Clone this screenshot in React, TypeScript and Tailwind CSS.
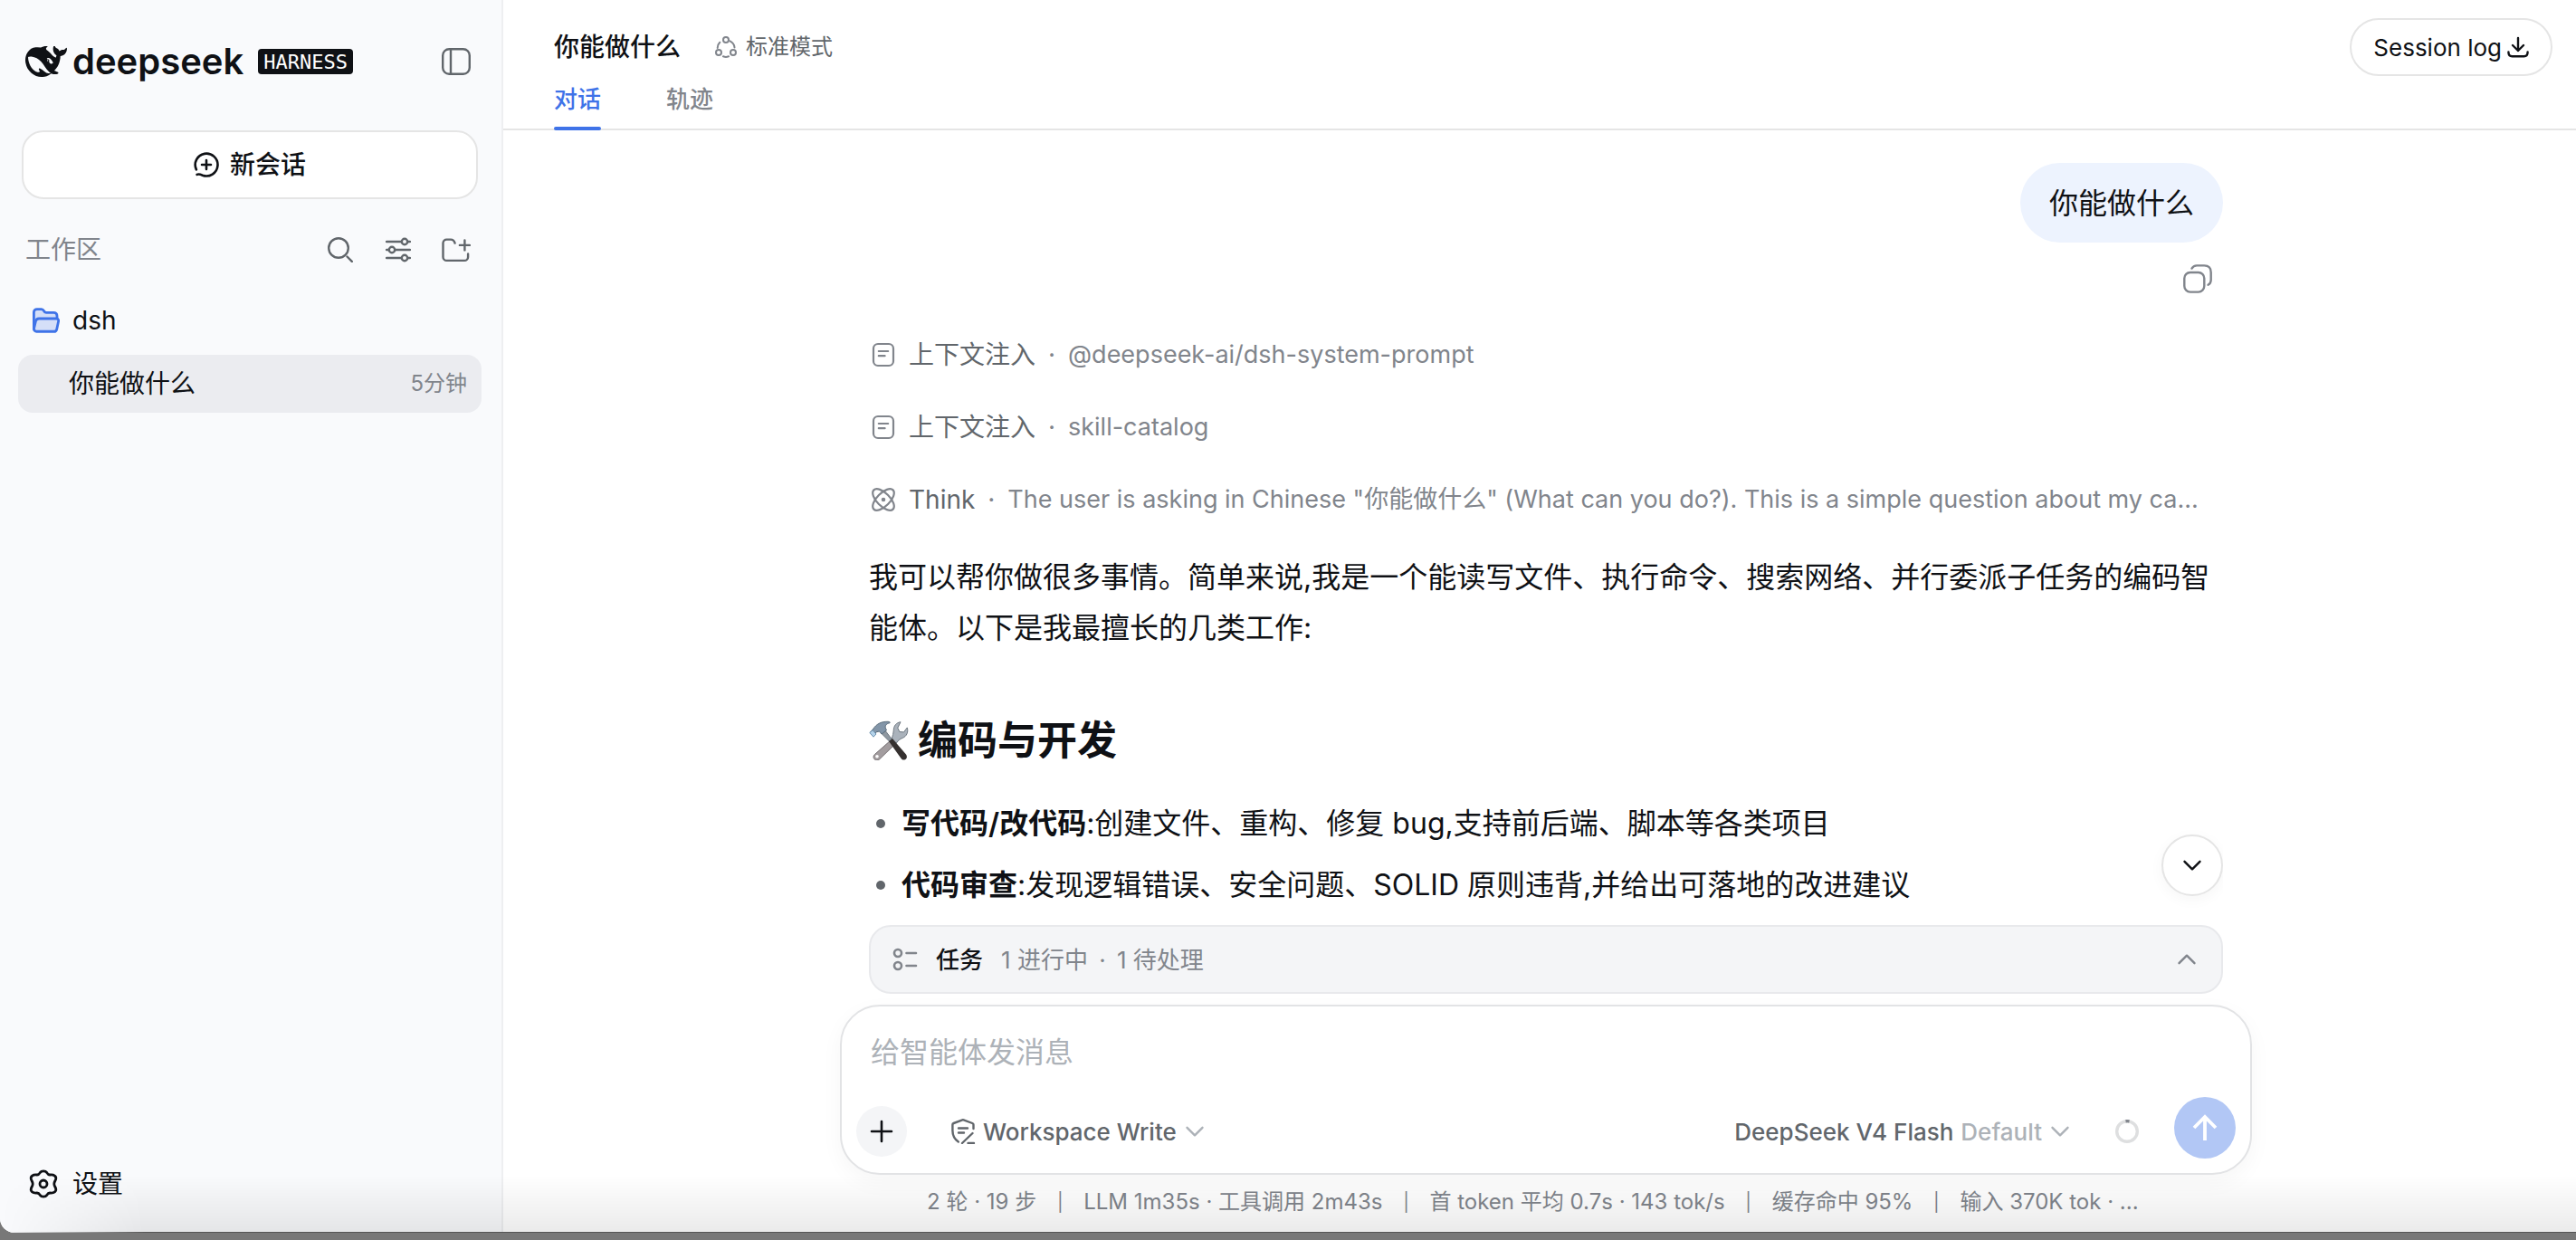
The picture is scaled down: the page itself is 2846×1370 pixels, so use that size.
import type { ReactNode } from "react";

const line = {
  fill: "none",
  stroke: "currentColor",
  strokeWidth: 2.4,
  strokeLinecap: "round",
  strokeLinejoin: "round",
} as const;

function Whale() {
  return (
    <svg className="w-[46px] h-[34px]" viewBox="0 3.5 24 17.2" fill="currentColor" preserveAspectRatio="none">
      <path d="M23.748 4.482c-.254-.124-.364.113-.512.234-.051.039-.094.09-.137.136-.372.397-.806.657-1.373.626-.829-.046-1.537.214-2.163.848-.133-.782-.575-1.248-1.247-1.548-.352-.156-.708-.311-.955-.65-.172-.241-.219-.51-.305-.774-.055-.16-.11-.323-.293-.35-.2-.031-.278.136-.356.276-.313.572-.434 1.202-.422 1.84.027 1.436.633 2.58 1.838 3.393.137.093.172.187.129.323-.082.28-.18.552-.266.833-.055.179-.137.217-.329.14a5.526 5.526 0 01-1.736-1.18c-.857-.828-1.631-1.742-2.597-2.458a11.365 11.365 0 00-.689-.471c-.985-.957.13-1.743.388-1.836.27-.098.093-.432-.779-.428-.872.004-1.67.295-2.687.684a3.055 3.055 0 01-.465.137 9.597 9.597 0 00-2.883-.102c-1.885.21-3.39 1.102-4.497 2.623C.082 8.606-.231 10.684.152 12.85c.403 2.284 1.569 4.175 3.36 5.653 1.858 1.533 3.997 2.284 6.438 2.14 1.482-.085 3.133-.284 4.994-1.86.47.234.962.327 1.78.397.63.059 1.236-.03 1.705-.128.735-.156.684-.837.419-.961-2.155-1.004-1.682-.595-2.113-.926 1.096-1.296 2.746-2.642 3.392-7.003.05-.347.007-.565 0-.845-.004-.17.035-.237.23-.256a4.173 4.173 0 001.545-.475c1.396-.763 1.96-2.015 2.093-3.517.02-.23-.004-.467-.247-.588zM11.581 18c-2.089-1.642-3.102-2.183-3.52-2.16-.392.024-.321.471-.235.763.09.288.207.486.371.739.114.167.192.416-.113.603-.673.416-1.842-.14-1.897-.167-1.361-.802-2.5-1.86-3.301-3.307-.774-1.393-1.224-2.887-1.298-4.482-.02-.386.093-.522.477-.592a4.696 4.696 0 011.529-.039c2.132.312 3.946 1.265 5.468 2.774.868.86 1.525 1.887 2.202 2.891.72 1.066 1.494 2.082 2.48 2.914.348.292.625.514.891.677-.802.09-2.14.11-3.054-.614zm1-6.44a.306.306 0 01.415-.287.302.302 0 01.2.288.306.306 0 01-.31.307.303.303 0 01-.304-.308zm3.11 1.596c-.2.081-.399.151-.59.16a1.245 1.245 0 01-.798-.254c-.274-.23-.47-.358-.552-.758a1.73 1.73 0 01.016-.588c.07-.327-.008-.537-.239-.727-.187-.156-.426-.199-.688-.199a.559.559 0 01-.254-.078c-.11-.054-.2-.19-.114-.358.028-.054.16-.186.192-.21.356-.202.767-.136 1.146.016.352.144.618.408 1.001.782.391.451.462.576.685.914.176.265.336.537.445.848.067.195-.019.354-.25.452z" />
    </svg>
  );
}

function PanelIcon() {
  return (
    <svg className="size-8" viewBox="0 0 32 32" {...line}>
      <rect x="1.2" y="2.2" width="29.6" height="27.6" rx="7" />
      <path d="M10 2.2v27.6" />
    </svg>
  );
}

function NewChatIcon() {
  return (
    <svg className="size-7" viewBox="0 0 28 28" {...line} strokeWidth={2.6}>
      <path d="M2.9 19.4A12.4 12.4 0 1 1 9.8 25.7C7.4 24.6 5.6 23.8 3.6 24.9" />
      <path d="M14 9v10M9 14h10" />
    </svg>
  );
}

function SearchIcon() {
  return (
    <svg className="size-7" viewBox="0 0 28 28" {...line}>
      <circle cx="12" cy="12" r="10.8" />
      <path d="M21.5 21.5l5.3 5.3" />
    </svg>
  );
}

function SlidersIcon() {
  return (
    <svg className="size-7" viewBox="0 0 28 28" {...line}>
      <path d="M1 5h16.6M24.4 5H27M1 14h2.6M10.4 14H27M1 23h16.6M24.4 23H27" />
      <circle cx="21" cy="5" r="3.2" />
      <circle cx="7" cy="14" r="3.2" />
      <circle cx="21" cy="23" r="3.2" />
    </svg>
  );
}

function AddFolderIcon() {
  return (
    <svg className="w-8 h-7" viewBox="0 0 32 28" {...line}>
      <path d="M14.6 6.6C13.8 3.8 12.6 2.6 10 2.6H5.4A3.9 3.9 0 0 0 1.5 6.5v15.4a4 4 0 0 0 4 4h19.6a4 4 0 0 0 4-4v-3.4" />
      <path d="M25.4 3.4v11M19.9 8.9h11" />
    </svg>
  );
}

function FolderIcon() {
  return (
    <svg className="w-[30px] h-7" viewBox="0 0 30 28" fill="#d5dff8" stroke="#3f73e8" strokeWidth="2.8" strokeLinejoin="round">
      <path d="M1.4 23V5a3.4 3.4 0 0 1 3.4-3.4h5c1.4 0 2 .6 2.6 1.8.6 1.3 1.2 1.9 2.6 1.9h8.4a3.6 3.6 0 0 1 3.6 3.6v3.4L25 26H4.4a3 3 0 0 1-3-3z" />
      <path d="M7.6 12h18.6a2.4 2.4 0 0 1 2.4 3l-1.8 8.4a3.4 3.4 0 0 1-3.4 2.8H4.6a3 3 0 0 1-3-3.6l1.8-7.6A4 4 0 0 1 7.6 12z" />
    </svg>
  );
}

function GearIcon() {
  return (
    <svg className="size-8" viewBox="0 0 32 32" {...line} strokeWidth={2.8}>
      <path d="M12.4 3.4c1.4-2 5.8-2 7.2 0 1 1.7 1.5 2.7 3.6 2.6 4.6-.4 7.4 1.6 6.4 5-.6 1.8-1.8 2.8-1.8 5s1.2 3.2 1.8 5c1 3.4-1.8 5.4-6.4 5-2.1-.1-2.6.9-3.6 2.6-1.4 2-5.8 2-7.2 0-1-1.700-1.500-2.700-3.600-2.600-4.600.4-7.400-1.600-6.400-5 .6-1.800 1.800-2.800 1.800-5S3 12.800 2.400 11C1.400 7.600 4.200 5.600 8.800 6c2.100.1 2.600-.9 3.600-2.600z" />
      <circle cx="16" cy="16" r="4" />
    </svg>
  );
}

function ModeIcon() {
  return (
    <svg className="size-6" viewBox="0 0 24 24" {...line} strokeWidth={2}>
      <circle cx="12" cy="4" r="3" />
      <circle cx="4" cy="18" r="3" />
      <circle cx="20" cy="18" r="3" />
      <path d="M16.5 5.4c3 1.500 4.700 3.800 5 7M2.700 13c0-2.500.8-4.500 2.600-6.200M9 22.300c2 .8 4 .8 6 0" />
    </svg>
  );
}

function DownloadIcon() {
  return (
    <svg className="size-6" viewBox="0 0 24 24" {...line}>
      <path d="M12 2v14M6 10l6 6 6-6M1.400 17.500c0 3.300 1 4.700 4 4.700h13.200c3 0 4-1.400 4-4.700" />
    </svg>
  );
}

function CopyIcon() {
  return (
    <svg className="size-8" viewBox="0 0 32 32" {...line}>
      <rect x="1.3" y="9" width="22" height="21.6" rx="6.5" />
      <path d="M9.500 4.600C10.800 2.300 12.500 1.400 15 1.400h8.200c5 0 7.500 2.500 7.500 7.500v8.300c0 2.700-.9 4.400-3.200 5.600" />
    </svg>
  );
}

function NoteIcon() {
  return (
    <svg className="size-7 shrink-0" viewBox="0 0 28 28" {...line} strokeWidth={2.2}>
      <rect x="3" y="2" width="22" height="24" rx="5" />
      <path d="M8.800 10h10.400M8.800 15.200h6.800" />
    </svg>
  );
}

function ThinkIcon() {
  return (
    <svg className="size-7 shrink-0" viewBox="0 0 28 28" {...line} strokeWidth={2.2}>
      <ellipse cx="14" cy="14" rx="15" ry="7.2" transform="rotate(45 14 14)" />
      <ellipse cx="14" cy="14" rx="15" ry="7.2" transform="rotate(-45 14 14)" />
      <circle cx="14" cy="14" r="1.2" fill="currentColor" />
    </svg>
  );
}

function ToolsIcon() {
  return (
    <svg className="size-11 shrink-0" viewBox="0 0 44 44" role="img" aria-label="工具">
      <path d="M24 22l5 4-17.500 17c-1.500 1.300-4 1.200-5.400-.2-1.500-1.500-1.300-3.800.2-5.200z" fill="#a39d9f" stroke="#756f72" strokeWidth="1" />
      <path d="M25 20c1.500-3 2-6 2.300-9.500C27.500 6 30 2.500 35 1.700l-3.200 6.500 2 4.300 4.700.4 3.800-5c1.500 5-.6 9.500-5 11.400-3 1.300-5 2.500-7 5.700z" fill="#aab2bb" stroke="#6d7780" strokeWidth="1" />
      <circle cx="9" cy="39.800" r="1.800" fill="#fff" />
      <path d="M13.500 14l4-3.500 8 10.500-3 2z" fill="#8f98a1" stroke="#6d7780" strokeWidth="1" />
      <path d="M22 23l4-3 15 17.500c1.500 2.300 1 4.200-.6 5.400-1.700 1.200-3.700.8-5-1.200z" fill="#35302f" />
      <path d="M1.500 13l3.500-4C8 4.500 13 1 21 1.300c2 .1 3 .8 1.800 1.500-3.800.9-5.300 3-4.300 6l1 2-5.400 4.200-2.600-3-3.500.8-2 3.500z" fill="#8295a8" stroke="#596b7b" strokeWidth="1" />
      <path d="M.8 13.500l3.300-2.800 3.900 4.300-3 3.200z" fill="#b5d3ea" stroke="#6f93b0" strokeWidth="1" />
    </svg>
  );
}

function TasksIcon() {
  return (
    <svg className="size-7" viewBox="0 0 28 28" {...line} strokeWidth={2.6}>
      <circle cx="6" cy="7" r="4" />
      <circle cx="6" cy="21" r="4" />
      <path d="M15.500 7H26M15.500 21H26" />
    </svg>
  );
}

function ShieldIcon() {
  return (
    <svg className="size-7" viewBox="0 0 28 28" {...line}>
      <path d="M25.500 11V6.600c0-.8-.4-1.300-1.200-1.600L14.600 1.400a2 2 0 0 0-1.300 0L3.600 5c-.8.300-1.200.8-1.200 1.600V13c0 5.600 2.200 9.600 6.400 12.500" />
      <path d="M9 10.500h10M9 15.500h6M24.500 16L13 27M19.500 27H26" />
    </svg>
  );
}

function Chevron({ className, up }: { className: string; up?: boolean }) {
  return (
    <svg className={className} viewBox="0 0 24 24" {...line}>
      <path d={up ? "M3.500 16.200l8.500-8.500 8.500 8.500" : "M3.500 7.800l8.500 8.500 8.500-8.500"} />
    </svg>
  );
}

const contexts = [
  { icon: <NoteIcon />, label: "上下文注入", detail: "@deepseek-ai/dsh-system-prompt" },
  { icon: <NoteIcon />, label: "上下文注入", detail: "skill-catalog" },
  {
    icon: <ThinkIcon />,
    label: "Think",
    detail:
      'The user is asking in Chinese "你能做什么" (What can you do?). This is a simple question about my ca...',
  },
];

const skills = [
  { name: "写代码/改代码", text: "创建文件、重构、修复 bug,支持前后端、脚本等各类项目" },
  { name: "代码审查", text: "发现逻辑错误、安全问题、SOLID 原则违背,并给出可落地的改进建议" },
];

const stats = [
  "2 轮 · 19 步",
  "LLM 1m35s · 工具调用 2m43s",
  "首 token 平均 0.7s · 143 tok/s",
  "缓存命中 95%",
  "输入 370K tok · ...",
];

function IconButton({ label, children }: { label: string; children: ReactNode }) {
  return (
    <button type="button" aria-label={label} className="size-8 flex items-center justify-center">
      {children}
    </button>
  );
}

function Sidebar() {
  return (
    <aside className="w-[556px] shrink-0 pr-0.5 flex flex-col bg-[#f9fafc] border-r-2 border-[#eeeff1]">
      <div className="h-[136px] pl-7 pr-8 flex items-center justify-between">
        <div className="flex items-center text-[#0f1115]">
          <Whale />
          <span className="ml-1.5 text-[40px] leading-[40px] font-semibold">deepseek</span>
          <span className="ml-4 h-7 px-1.5 flex items-center rounded bg-[#0f1115] text-white text-[22px] font-['DejaVu_Sans_Mono',monospace]">
            HARNESS
          </span>
        </div>
        <span className="text-[#61666b] flex">
          <IconButton label="收起侧栏">
            <PanelIcon />
          </IconButton>
        </span>
      </div>

      <button
        type="button"
        className="mt-2 mx-6 h-[76px] flex items-center justify-center gap-3 rounded-3xl border-2 border-[#e5e5e5] bg-white text-[28px] font-medium"
      >
        <NewChatIcon />
        新会话
      </button>

      <div className="mt-9 h-10 pl-7 pr-8 flex items-center justify-between text-[28px] text-[#81858c]">
        工作区
        <div className="flex items-center gap-8 text-[#61666b]">
          <IconButton label="搜索">
            <SearchIcon />
          </IconButton>
          <IconButton label="筛选">
            <SlidersIcon />
          </IconButton>
          <IconButton label="添加工作区">
            <AddFolderIcon />
          </IconButton>
        </div>
      </div>

      <nav className="mt-6 px-5 flex flex-col gap-1 text-[28px]">
        <a href="#dsh" className="h-[68px] px-4 flex items-center gap-3.5">
          <FolderIcon />
          dsh
        </a>
        <a href="#session" className="h-16 pl-14 pr-4 flex items-center justify-between rounded-2xl bg-[#ebecf0]">
          你能做什么
          <span className="text-2xl text-[#81858c]">5分钟</span>
        </a>
      </nav>

      <button type="button" className="mt-auto mb-8 ml-8 h-11 flex items-center gap-4 text-[28px]">
        <GearIcon />
        设置
      </button>
    </aside>
  );
}

function Header() {
  return (
    <header className="h-36 shrink-0 pl-14 pr-[26px] flex items-start justify-between border-b-2 border-[#e5e5e5]">
      <div className="pt-8">
        <div className="h-10 flex items-center gap-[38px]">
          <h1 className="text-[28px] font-medium">你能做什么</h1>
          <span className="flex items-center gap-2.5 text-2xl text-[#61666b]">
            <span className="text-[#81858c]">
              <ModeIcon />
            </span>
            标准模式
          </span>
        </div>
        <div className="mt-1.5 flex gap-[72px] text-[26px] font-medium">
          <button type="button" className="h-[66px] pb-1 relative text-[#3f73e8]">
            对话
            <span className="absolute inset-x-0 bottom-0 h-1 rounded-full bg-[#3f73e8]" />
          </button>
          <button type="button" className="h-[66px] pb-1 text-[#81858c]">
            轨迹
          </button>
        </div>
      </div>
      <button
        type="button"
        className="mt-5 h-16 px-6 flex items-center gap-1.5 rounded-full border-2 border-[#e5e5e5] text-[26px]"
      >
        Session log
        <DownloadIcon />
      </button>
    </header>
  );
}

function Conversation() {
  return (
    <div className="flex-1 min-h-0 relative overflow-hidden">
      <div className="pt-9 flex flex-col">
        <p className="self-end h-[88px] pt-0.5 px-8 flex items-center rounded-full bg-[#edf3fe] text-[32px]">
          你能做什么
        </p>
        <div className="mt-6 mr-3 self-end flex text-[#81858c]">
          <IconButton label="复制">
            <CopyIcon />
          </IconButton>
        </div>

        <div className="mt-12 flex flex-col gap-10 text-[28px] text-[#81858c]">
          {contexts.map((item, i) => (
            <div key={i} className="h-10 pl-0.5 flex items-center whitespace-nowrap">
              {item.icon}
              <span className="ml-3.5 text-[#61666b]">{item.label}</span>
              <span className="w-9 shrink-0 text-center">·</span>
              <span className="text-[27px]">{item.detail}</span>
            </div>
          ))}
        </div>

        <p className="mt-[38px] text-[32px] leading-[56px]">
          我可以帮你做很多事情。简单来说,我是一个能读写文件、执行命令、搜索网络、并行委派子任务的编码智能体。以下是我最擅长的几类工作:
        </p>

        <h2 className="mt-[66px] h-15 flex items-center gap-2.5 text-[44px] font-semibold">
          <ToolsIcon />
          编码与开发
        </h2>

        <ul className="mt-[34px] flex flex-col gap-3 text-[32px] leading-[56px]">
          {skills.map((skill) => (
            <li key={skill.name} className="pl-2 flex items-center">
              <span className="size-2.5 mr-[18px] rounded-full bg-[#61666b]" />
              <p>
                <strong className="font-semibold">{skill.name}</strong>:{skill.text}
              </p>
            </li>
          ))}
        </ul>
      </div>

      <button
        type="button"
        aria-label="滚动到底部"
        className="absolute right-0 bottom-8 size-[68px] flex items-center justify-center rounded-full border-2 border-[#e5e5e5] bg-white shadow-[0_4px_16px_rgba(0,0,0,0.04)]"
      >
        <Chevron className="size-6" />
      </button>
    </div>
  );
}

function Composer() {
  return (
    <form className="-mx-8 mt-3 px-4 pt-6 pb-4 rounded-[44px] border-2 border-[#e2e3e5] bg-white shadow-[0_8px_24px_rgba(0,0,0,0.04)]">
      <textarea
        aria-label="给智能体发消息"
        placeholder="给智能体发消息"
        className="block w-full h-[76px] px-4 resize-none outline-none text-[32px] leading-[54px] placeholder:text-[#adb2b8]"
      />
      <div className="flex items-end justify-between text-[26px] font-medium text-[#61666b]">
        <div className="pb-0.5 flex items-center">
          <button
            type="button"
            aria-label="添加附件"
            className="size-14 flex items-center justify-center rounded-full bg-[#f4f5f7] text-[#0f1115]"
          >
            <svg className="size-7" viewBox="0 0 28 28" {...line} strokeWidth={2.6}>
              <path d="M14 3v22M3 14h22" />
            </svg>
          </button>
          <label className="ml-12 flex items-center">
            <ShieldIcon />
            <select aria-label="权限" className="ml-2 appearance-none field-sizing-content outline-none">
              <option>Workspace Write</option>
            </select>
            <Chevron className="ml-2 size-6 text-[#adb2b8]" />
          </label>
        </div>
        <div className="flex items-end">
          <label className="h-14 mb-0.5 flex items-center">
            <select aria-label="模型" className="appearance-none field-sizing-content outline-none">
              <option>DeepSeek V4 Flash</option>
            </select>
            <select
              aria-label="推理强度"
              className="ml-2 appearance-none field-sizing-content outline-none text-[#adb2b8]"
            >
              <option>Default</option>
            </select>
            <Chevron className="ml-2 size-6 text-[#adb2b8]" />
          </label>
          <svg className="ml-12 mb-4 size-7" viewBox="0 0 28 28" fill="none" strokeWidth="3.4">
            <circle cx="14" cy="14" r="11.3" stroke="#dedfe0" />
            <path d="M12.500 2.800a11.300 11.300 0 0 1 4 .1" stroke="#81858c" />
          </svg>
          <button
            type="submit"
            aria-label="发送"
            className="ml-[38px] size-[68px] flex items-center justify-center rounded-full bg-[#b2c7f5] text-white"
          >
            <svg className="size-8" viewBox="0 0 32 32" {...line} strokeWidth={3.8} strokeLinecap="butt" strokeLinejoin="miter">
              <path d="M16 30V4M4 16L16 4l12 12" />
            </svg>
          </button>
        </div>
      </div>
    </form>
  );
}

export default function App() {
  return (
    <div className="h-screen pb-2 flex bg-[#787878] font-[Inter,'Noto_Sans_CJK_SC',sans-serif] text-[#0f1115]">
      <div className="relative flex-1 min-w-0 flex overflow-hidden rounded-bl-2xl bg-white">
        <Sidebar />
        <main className="flex-1 min-w-0 flex flex-col">
          <Header />
          <div className="flex-1 min-h-0 w-full max-w-[1510px] mx-auto pl-3.5 flex flex-col">
            <Conversation />
            <button
              type="button"
              className="h-[76px] shrink-0 px-6 flex items-center rounded-3xl border-2 border-[#e8e9ec] bg-[#f4f5f7] text-[26px] text-[#81858c]"
            >
              <TasksIcon />
              <span className="ml-5 font-medium text-[#0f1115]">任务</span>
              <span className="ml-5">1 进行中</span>
              <span className="w-8 text-center">·</span>
              <span>1 待处理</span>
              <Chevron up className="ml-auto mr-0.5 size-6" />
            </button>
            <Composer />
            <div className="mt-3 h-9 mb-4 pl-16 flex items-center text-2xl text-[#81858c] whitespace-nowrap">
              {stats.map((stat, i) => (
                <span key={stat} className="flex items-center">
                  {i > 0 && <span className="w-[52px] text-center text-xl">|</span>}
                  {stat}
                </span>
              ))}
            </div>
          </div>
        </main>
        <div className="absolute inset-x-0 bottom-0 h-16 pointer-events-none border-b border-[#555] bg-linear-to-t from-black/8 to-transparent [mask-image:linear-gradient(to_right,transparent,black_160px)]" />
      </div>
    </div>
  );
}
